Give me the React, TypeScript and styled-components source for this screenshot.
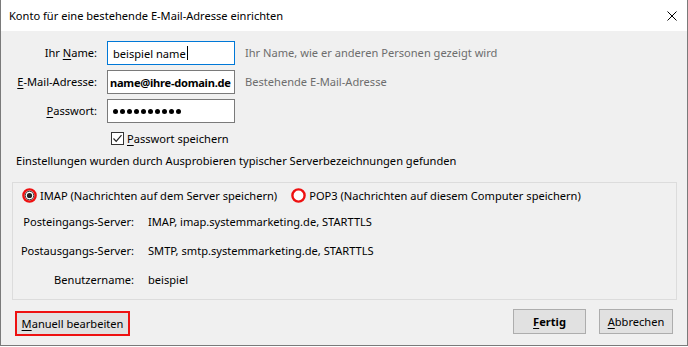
import React from 'react';
import styled, { createGlobalStyle, css } from 'styled-components';

const GlobalStyle = createGlobalStyle`
  html, body {
    margin: 0;
    padding: 0;
    background: #ffffff;
  }
  body {
    font-family: 'Noto Sans', 'Open Sans', sans-serif;
    font-size: 11.1px;
    color: #000;
  }
  * {
    box-sizing: border-box;
  }
`;

const Window = styled.div`
  width: 688px;
  height: 346px;
  display: flex;
  flex-direction: column;
  border: 1px solid #7a7a7a;
  border-top: none;
  background: #f0f0f0;
`;

const TitleBar = styled.div`
  flex: none;
  height: 31px;
  display: flex;
  align-items: center;
  justify-content: space-between;
  padding: 0 10px 0 8px;
  background: #fff;
`;

const Title = styled.span`
  line-height: 16px;
`;

const Body = styled.div`
  flex: 1;
  display: flex;
  flex-direction: column;
  padding: 10px 10px 11px 11px;
`;

const Form = styled.div`
  display: grid;
  grid-template-columns: 85px 128px 1fr;
  grid-template-rows: 24px 24px 24px 20px;
  column-gap: 10px;
  row-gap: 5px;
  align-items: center;
`;

const Label = styled.span`
  text-align: right;
  line-height: 16px;
  white-space: nowrap;
`;

const Key = styled.span`
  text-decoration: underline;
  text-underline-offset: 2px;
`;

const TextField = styled.div<{ focused?: boolean; bold?: boolean; inset?: number }>(
  ({ focused, bold, inset = 5 }) => css`
    height: 24px;
    display: flex;
    align-items: center;
    padding: 0 ${inset}px;
    background: #fff;
    border: 1px solid ${focused ? '#0078d7' : '#7a7a7a'};
    font-weight: ${bold ? 700 : 400};
    letter-spacing: ${bold ? '-0.25px' : 'normal'};
    white-space: nowrap;
    overflow: hidden;
  `,
);

const Caret = styled.span`
  width: 1px;
  height: 14px;
  margin-left: 1px;
  background: #000;
`;

const Dots = styled.div`
  display: flex;
  gap: 2px;
`;

const Dot = styled.span`
  width: 5px;
  height: 5px;
  border-radius: 50%;
  background: #000;
`;

const Hint = styled.span`
  color: #6d6d6d;
  line-height: 16px;
  white-space: nowrap;
`;

const CheckRow = styled.label`
  grid-column: 2 / span 2;
  height: 20px;
  display: flex;
  align-items: center;
  gap: 3px;
  margin-left: 4px;
`;

const CheckBox = styled.span`
  width: 13px;
  height: 13px;
  display: flex;
  align-items: center;
  justify-content: center;
  background: #fff;
  border: 1px solid #333;
`;

const Info = styled.div`
  margin-top: 5px;
  padding-left: 4px;
  line-height: 16px;
  white-space: nowrap;
`;

const Group = styled.div`
  margin-top: 13px;
  height: 118px;
  display: grid;
  grid-template-rows: 25px 28px 29px 29px;
  padding-bottom: 5px;
  border: 1px solid #dcdcdc;
`;

const RadioRow = styled.div`
  display: flex;
  align-items: center;
  padding-left: 9px;
  gap: 14px;
`;

const RadioOption = styled.label`
  display: flex;
  align-items: center;
  gap: 3px;
  white-space: nowrap;
  line-height: 16px;
`;

const ServerRow = styled.div`
  display: grid;
  grid-template-columns: 121px 1fr;
  column-gap: 14px;
  align-items: center;
  line-height: 16px;
  white-space: nowrap;
`;

const ServerLabel = styled.span`
  text-align: right;
`;

const ButtonRow = styled.div`
  margin-top: 9px;
  height: 25px;
  display: flex;
  align-items: flex-start;
  gap: 13px;
  padding-right: 4px;
`;

const Button = styled.button<{ width: number; marked?: boolean; primary?: boolean }>(
  ({ width, marked, primary }) => css`
    width: ${width}px;
    height: 25px;
    padding: 0;
    font: inherit;
    font-weight: ${primary ? 700 : 400};
    color: #000;
    background: #e1e1e1;
    border: 1px solid #adadad;
    ${marked &&
    css`
      margin: 2px 0 0 3px;
      border: 2px solid #ee1111;
    `}
  `,
);

const Spacer = styled.div`
  flex: 1;
`;

const CloseIcon = () => (
  <svg width="10" height="10" viewBox="0 0 10 10">
    <path d="M0.5 0.5 L9.5 9.5 M9.5 0.5 L0.5 9.5" stroke="#000" strokeWidth="1" />
  </svg>
);

const CheckIcon = () => (
  <svg width="11" height="11" viewBox="0 0 11 11">
    <path d="M1.5 5.5 L4.2 8.3 L9.5 2.2" stroke="#222" strokeWidth="1.2" fill="none" />
  </svg>
);

const Radio = ({ checked }: { checked?: boolean }) => (
  <svg width="15" height="15" viewBox="0 0 15 15">
    <circle cx="7.5" cy="7.5" r="6.1" fill="#fff" stroke="#ee1111" strokeWidth="2.4" />
    {checked && <circle cx="7.5" cy="7.5" r="4.3" fill="none" stroke="#333" strokeWidth="1" />}
    {checked && <circle cx="7.5" cy="7.5" r="2.6" fill="#222" />}
  </svg>
);

const servers = [
  { label: 'Posteingangs-Server:', value: 'IMAP, imap.systemmarketing.de, STARTTLS' },
  { label: 'Postausgangs-Server:', value: 'SMTP, smtp.systemmarketing.de, STARTTLS' },
  { label: 'Benutzername:', value: 'beispiel' },
];

export default function App() {
  return (
    <>
      <GlobalStyle />
      <Window>
        <TitleBar>
          <Title>Konto für eine bestehende E-Mail-Adresse einrichten</Title>
          <CloseIcon />
        </TitleBar>
        <Body>
          <Form>
            <Label>
              Ihr <Key>N</Key>ame:
            </Label>
            <TextField focused>
              beispiel name
              <Caret />
            </TextField>
            <Hint>Ihr Name, wie er anderen Personen gezeigt wird</Hint>

            <Label>
              <Key>E</Key>-Mail-Adresse:
            </Label>
            <TextField bold inset={2}>
              name@ihre-domain.de
            </TextField>
            <Hint>Bestehende E-Mail-Adresse</Hint>

            <Label>
              <Key>P</Key>asswort:
            </Label>
            <TextField>
              <Dots>
                {Array.from({ length: 10 }, (_, i) => (
                  <Dot key={i} />
                ))}
              </Dots>
            </TextField>
            <span />

            <span />
            <CheckRow>
              <CheckBox>
                <CheckIcon />
              </CheckBox>
              <span>
                <Key>P</Key>asswort speichern
              </span>
            </CheckRow>
          </Form>

          <Info>Einstellungen wurden durch Ausprobieren typischer Serverbezeichnungen gefunden</Info>

          <Group>
            <RadioRow>
              <RadioOption>
                <Radio checked />
                IMAP (Nachrichten auf dem Server speichern)
              </RadioOption>
              <RadioOption>
                <Radio />
                POP3 (Nachrichten auf diesem Computer speichern)
              </RadioOption>
            </RadioRow>
            {servers.map((s) => (
              <ServerRow key={s.label}>
                <ServerLabel>{s.label}</ServerLabel>
                <span>{s.value}</span>
              </ServerRow>
            ))}
          </Group>

          <ButtonRow>
            <Button width={115} marked>
              <Key>M</Key>anuell bearbeiten
            </Button>
            <Spacer />
            <Button width={73} primary>
              <Key>F</Key>ertig
            </Button>
            <Button width={74}>
              <Key>A</Key>bbrechen
            </Button>
          </ButtonRow>
        </Body>
      </Window>
    </>
  );
}
